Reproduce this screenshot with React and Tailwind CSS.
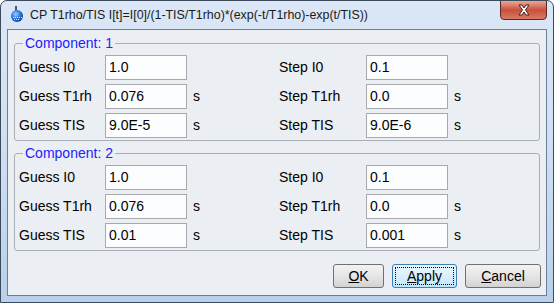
import React from "react";

function Field({ value }) {
  return (
    <div className="h-[25px] border border-[#a7a9ad] bg-[#fbfdff] pl-[3px] flex items-center text-[14px] text-black">
      {value}
    </div>
  );
}

function Group({ title, rows, className }) {
  return (
    <fieldset
      className={
        "ml-[6px] mr-[6px] border border-[#a9aeb4] rounded-[3px] pl-[4px] pt-[4px] pb-[2px] " +
        className
      }
    >
      <legend className="ml-[4px] px-[2px] text-[14px] leading-[16px] text-[#2222ff]">
        {title}
      </legend>
      <div className="grid grid-cols-[86px_82px_92px_87px_82px_1fr] auto-rows-[25px] gap-y-[4px] text-[14px] text-black">
        {rows.map((r, i) => (
          <React.Fragment key={i}>
            <div className="flex items-center">{r[0]}</div>
            <Field value={r[1]} />
            <div className="flex items-center pl-[6px]">{r[2] ? "s" : ""}</div>
            <div className="flex items-center">{r[3]}</div>
            <Field value={r[4]} />
            <div className="flex items-center pl-[6px]">{r[2] ? "s" : ""}</div>
          </React.Fragment>
        ))}
      </div>
    </fieldset>
  );
}

function Btn({ children, focused, w }) {
  if (focused) {
    return (
      <div
        className={
          "h-[24px] rounded-[3px] border border-[#3c7fb1] bg-gradient-to-b from-[#eaf6fd] via-[#d9f0fc] to-[#bee6fd] p-[2px] " +
          w
        }
      >
        <div className="h-full border border-dotted border-black flex items-center justify-center text-[14px] text-black">
          {children}
        </div>
      </div>
    );
  }
  return (
    <div
      className={
        "h-[24px] rounded-[3px] border border-[#707070] bg-gradient-to-b from-[#f2f2f2] via-[#e6e6e6] to-[#d2d2d2] flex items-center justify-center text-[14px] text-black " +
        w
      }
    >
      {children}
    </div>
  );
}

export default function App() {
  const c1 = [
    ["Guess I0", "1.0", false, "Step I0", "0.1"],
    ["Guess T1rh", "0.076", true, "Step T1rh", "0.0"],
    ["Guess TIS", "9.0E-5", true, "Step TIS", "9.0E-6"],
  ];
  const c2 = [
    ["Guess I0", "1.0", false, "Step I0", "0.1"],
    ["Guess T1rh", "0.076", true, "Step T1rh", "0.0"],
    ["Guess TIS", "0.01", true, "Step TIS", "0.001"],
  ];
  return (
    <div className="w-[554px] h-[303px] font-['Liberation_Sans',Arial,sans-serif] bg-white">
      <div className="w-[554px] h-[303px] border border-[#3d4a5b] rounded-t-[7px] bg-gradient-to-b from-[#dbe7f6] via-[#cfdff2] to-[#b9d0ea] flex flex-col overflow-hidden">
        {/* title bar */}
        <div className="h-[28px] flex items-start relative">
          <div className="ml-[9px] mt-[4px] w-[14px] h-[18px]">
            <svg width="14" height="18" viewBox="0 0 14 18">
              <line x1="6" y1="1" x2="6" y2="6" stroke="#223" strokeWidth="1.5" />
              <defs>
                <radialGradient id="orb" cx="0.4" cy="0.35" r="0.7">
                  <stop offset="0" stopColor="#9fd0ff" />
                  <stop offset="0.5" stopColor="#2f7be0" />
                  <stop offset="1" stopColor="#0b3a9a" />
                </radialGradient>
              </defs>
              <circle cx="7" cy="11" r="6" fill="url(#orb)" />
              <g fill="#ffffff" opacity="0.85">
                <rect x="3" y="12" width="1" height="1" />
                <rect x="5" y="12" width="1" height="1" />
                <rect x="7" y="12" width="1" height="1" />
                <rect x="9" y="12" width="1" height="1" />
                <rect x="11" y="12" width="1" height="1" />
                <rect x="4" y="14" width="1" height="1" />
                <rect x="6" y="14" width="1" height="1" />
                <rect x="8" y="14" width="1" height="1" />
              </g>
            </svg>
          </div>
          <div className="ml-[6px] mt-[6px] text-[12.4px] leading-[16px] text-[#1a1a1a] whitespace-nowrap">
            CP T1rho/TIS I[t]=I[0]/(1-TIS/T1rho)*(exp(-t/T1rho)-exp(t/TIS))
          </div>
          <div className="absolute right-[6px] top-[-1px] w-[47px] h-[20px] rounded-b-[4px] border border-[#5b2a24] bg-gradient-to-b from-[#e9a797] via-[#c8503a] to-[#d67a64] flex items-center justify-center">
            <svg width="16" height="12" viewBox="0 0 16 12">
              <path
                d="M3 1 L6 1 L8 4 L10 1 L13 1 L9.5 6 L13 11 L10 11 L8 8 L6 11 L3 11 L6.5 6 Z"
                fill="#ffffff"
                stroke="#4a1d18"
                strokeWidth="1"
                strokeLinejoin="round"
              />
            </svg>
          </div>
        </div>
        {/* content */}
        <div className="ml-[6px] mr-[6px] h-[267px] border border-[#6d7f96] bg-[#ebeef2] flex flex-col">
          <Group title="Component: 1" rows={c1} className="mt-[5px]" />
          <Group title="Component: 2" rows={c2} className="mt-[4px]" />
          <div className="flex justify-end gap-[8px] mt-[13px] mr-[5px]">
            <Btn w="w-[51px]">
              <span><span className="underline">O</span>K</span>
            </Btn>
            <Btn w="w-[65px]" focused>
              <span><span className="underline">A</span>pply</span>
            </Btn>
            <Btn w="w-[76px]">
              <span><span className="underline">C</span>ancel</span>
            </Btn>
          </div>
        </div>
      </div>
    </div>
  );
}
